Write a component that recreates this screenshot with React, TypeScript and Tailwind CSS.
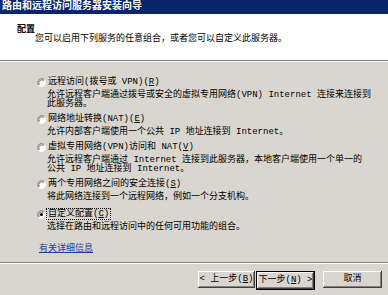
import React from 'react';

const font = { fontFamily: '"Liberation Mono", "Noto Sans CJK SC", monospace' };

function Radio({ checked }: { checked?: boolean }) {
  return (
    <svg width="9" height="9" viewBox="0 0 9 9" className="shrink-0">
      <circle cx="4.5" cy="4.5" r="4" fill="#ffffff" />
      <path d="M1.67 7.33 A4 4 0 0 1 7.33 1.67" fill="none" stroke="#808080" strokeWidth="1" />
      <path d="M7.33 1.67 A4 4 0 0 1 1.67 7.33" fill="none" stroke="#ffffff" strokeWidth="1" />
      <path d="M2.4 6.6 A3 3 0 0 1 6.6 2.4" fill="none" stroke="#404040" strokeWidth="0.8" />
      {checked && <circle cx="4.5" cy="4.5" r="1.5" fill="#000000" />}
    </svg>
  );
}

interface Opcion {
  label: React.ReactNode;
  desc: string[];
  checked?: boolean;
  focus?: boolean;
  mt: string;
}

const U = ({ c }: { c: string }) => <span className="underline">{c}</span>;

const opciones: Opcion[] = [
  {
    label: <>远程访问(拨号或 VPN)(<U c="R" />)</>,
    desc: ['允许远程客户端通过拨号或安全的虚拟专用网络(VPN) Internet 连接来连接到', '此服务器。'],
    mt: 'mt-0',
  },
  {
    label: <>网络地址转换(NAT)(<U c="E" />)</>,
    desc: ['允许内部客户端使用一个公共 IP 地址连接到 Internet。'],
    mt: 'mt-[5px]',
  },
  {
    label: <>虚拟专用网络(VPN)访问和 NAT(<U c="V" />)</>,
    desc: ['允许远程客户端通过 Internet 连接到此服务器，本地客户端使用一个单一的', '公共 IP 地址连接到 Internet。'],
    mt: 'mt-[5px]',
  },
  {
    label: <>两个专用网络之间的安全连接(<U c="S" />)</>,
    desc: ['将此网络连接到一个远程网络，例如一个分支机构。'],
    mt: 'mt-[5px]',
  },
  {
    label: <>自定义配置(<U c="C" />)</>,
    desc: ['选择在路由和远程访问中的任何可用功能的组合。'],
    checked: true,
    focus: true,
    mt: 'mt-[7px]',
  },
];

const btn =
  'h-[17px] bg-[#d9d6cf] text-[9px] leading-[17px] text-black text-center whitespace-nowrap shadow-[inset_-1px_-1px_#404040,inset_1px_1px_#ffffff,inset_-2px_-2px_#808080]';

export default function App() {
  return (
    <div className="w-[388px] h-[295px] overflow-hidden bg-[#d9d6cf] flex flex-col" style={font}>
      <div className="h-[14px] bg-[#0a246a] px-[2px] text-white text-[10px] leading-[14px] font-bold whitespace-nowrap">
        路由和远程访问服务器安装向导
      </div>

      <div className="h-[46px] bg-white pt-[11px]">
        <div className="pl-[17px] text-[9px] leading-[10px] font-bold text-black">配置</div>
        <div className="pl-[35px] text-[9px] leading-[9px] text-black whitespace-nowrap">
          您可以启用下列服务的任意组合，或者您可以自定义此服务器。
        </div>
      </div>
      <div className="h-px bg-[#808080]" />
      <div className="h-px bg-white" />

      <div className="pt-[15px] pl-[37px] text-[9px] text-black">
        {opciones.map((o, i) => (
          <div key={i} className={o.mt}>
            <div className="flex items-center h-[10px]">
              <Radio checked={o.checked} />
              <span
                className={
                  'ml-[1px] leading-[10px] whitespace-nowrap px-px ' +
                  (o.focus ? 'outline outline-1 outline-dotted outline-black' : '')
                }
              >
                {o.label}
              </span>
            </div>
            <div className="mt-[4px] pl-[10px]">
              {o.desc.map((d, j) => (
                <div key={j} className="leading-[9px] h-[9px] whitespace-nowrap">
                  {d}
                </div>
              ))}
            </div>
          </div>
        ))}
        <div className="mt-[12px] pl-[2px] h-[10px] leading-[10px] text-[#1c3f9e] underline">有关详细信息</div>
      </div>

      <div className="mt-[8px] h-px bg-[#808080]" />
      <div className="h-px bg-white" />

      <div className="mt-[7px] flex justify-end pr-[6px]">
        <div className={btn + ' w-[57px]'}>
          &lt; 上一步(<U c="B" />)
        </div>
        <div className="ml-px border border-black">
          <div className={btn + ' w-[57px] h-[15px] leading-[15px]'}>
            下一步(<U c="N" />) &gt;
          </div>
        </div>
        <div className={btn + ' w-[59px] ml-[8px]'}>取消</div>
      </div>
    </div>
  );
}
